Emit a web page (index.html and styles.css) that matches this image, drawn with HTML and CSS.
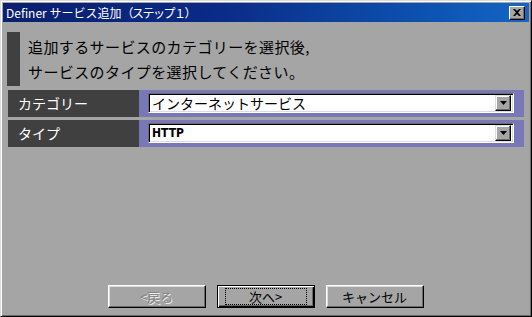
FILE: index.html
```html
<!DOCTYPE html>
<html lang="ja">
<head>
    <meta charset="UTF-8">
    <title>Definer サービス追加（ステップ１）</title>
    <link rel="stylesheet" href="styles.css">
</head>
<body>
    <div class="window">
        <div class="titlebar">
            <span class="title">Definer サービス追加<span class="step">（ステップ１）</span></span>
            <button class="close" aria-label="閉じる">
                <svg width="8" height="7" viewBox="0 0 8 7"><path d="M0 0h2l2 2 2-2h2L5 3.5 8 7H6L4 5 2 7H0l3-3.5z" fill="#000"/></svg>
            </button>
        </div>
        <div class="content">
            <div class="intro">
                <div class="bar"></div>
                <p>追加するサービスのカテゴリーを選択後,<br>サービスのタイプを選択してください。</p>
            </div>

            <div class="row">
                <div class="label">カテゴリー</div>
                <div class="field">
                    <div class="combo">
                        <span class="value">インターネットサービス</span>
                        <span class="drop"><svg width="7" height="4" viewBox="0 0 7 4"><path d="M0 0h7L3.5 4z" fill="#000"/></svg></span>
                    </div>
                </div>
            </div>
            <div class="row">
                <div class="label">タイプ</div>
                <div class="field">
                    <div class="combo">
                        <span class="value mono">HTTP</span>
                        <span class="drop"><svg width="7" height="4" viewBox="0 0 7 4"><path d="M0 0h7L3.5 4z" fill="#000"/></svg></span>
                    </div>
                </div>
            </div>

            <div class="buttons">
                <button class="btn disabled">&lt;戻る</button>
                <button class="btn default"><span class="focus">次へ&gt;</span></button>
                <button class="btn">キャンセル</button>
            </div>
        </div>
    </div>
</body>
</html>
```

FILE: styles.css
```css
body {
    margin: 0;
    background-color: #a5a5a5;
    font-family: "Noto Sans CJK JP", "DejaVu Sans", sans-serif;
}
.window {
    width: 532px;
    height: 317px;
    box-sizing: border-box;
    border: 1px solid;
    border-color: #dcdcdc #000 #000 #dcdcdc;
    box-shadow: inset 1px 1px #fff, inset -1px -1px #6a6a6a;
    padding: 2px;
    display: flex;
    flex-direction: column;
    background-color: #a5a5a5;
}
.titlebar {
    height: 19px;
    display: flex;
    align-items: center;
    justify-content: space-between;
    padding: 0 4px 0 3px;
    background: linear-gradient(to right, #0a1f6f, #0a2a86 40%, #0d52b0 80%, #1466c4);
    color: #fff;
}
.title {
    font-size: 12px;
    line-height: 19px;
}
.step {
    letter-spacing: -1.5px;
}
.close {
    width: 16px;
    height: 14px;
    padding: 0;
    margin: 0;
    display: flex;
    align-items: center;
    justify-content: center;
    background-color: #a5a5a5;
    border: 1px solid;
    border-color: #fff #000 #000 #fff;
    box-shadow: inset -1px -1px #6a6a6a;
}
.content {
    flex: 1;
    display: flex;
    flex-direction: column;
    padding: 10px 5px 0 4px;
}
.intro {
    display: flex;
    height: 54px;
}
.bar {
    width: 13px;
    background-color: #404040;
    margin-right: 8px;
}
.intro p {
    margin: 0;
    padding-top: 2px;
    font-size: 15px;
    line-height: 25px;
    letter-spacing: 0.4px;
    color: #000;
}
.row {
    display: flex;
    height: 27px;
    margin-left: 1px;
}
.intro + .row {
    margin-top: 4px;
}
.row + .row {
    margin-top: 3px;
}
.label {
    width: 131px;
    background-color: #404040;
    color: #fff;
    font-size: 14px;
    line-height: 27px;
    padding-left: 10px;
    box-sizing: border-box;
}
.field {
    width: 385px;
    background-color: #7878b8;
    padding: 3px 10px 4px 9px;
    box-sizing: border-box;
}
.combo {
    height: 20px;
    box-sizing: border-box;
    display: flex;
    align-items: center;
    background-color: #fff;
    border: 1px solid;
    border-color: #6a6a6a #fff #fff #6a6a6a;
    box-shadow: inset 1px 1px #000, inset -1px -1px #dcdcdc;
    padding: 0 2px 0 3px;
}
.value {
    flex: 1;
    font-size: 14px;
    line-height: 18px;
}
.value.mono {
    font-family: "DejaVu Sans Condensed", "DejaVu Sans", sans-serif;
    font-size: 12px;
    font-weight: bold;
}
.drop {
    width: 16px;
    height: 16px;
    box-sizing: border-box;
    display: flex;
    align-items: center;
    justify-content: center;
    background-color: #a5a5a5;
    border: 1px solid;
    border-color: #dcdcdc #000 #000 #dcdcdc;
    box-shadow: inset -1px -1px #6a6a6a, inset 1px 1px #fff;
}
.buttons {
    margin-top: auto;
    margin-bottom: 6px;
    display: flex;
    justify-content: center;
    gap: 11px;
}
.btn {
    width: 98px;
    height: 23px;
    padding: 0;
    margin: 0;
    box-sizing: border-box;
    background-color: #a5a5a5;
    border: 1px solid;
    border-color: #fff #000 #000 #fff;
    box-shadow: inset -1px -1px #6a6a6a, inset 1px 1px #dcdcdc;
    font-family: "Noto Sans CJK JP", sans-serif;
    font-size: 13px;
    color: #000;
    display: flex;
    align-items: center;
    justify-content: center;
}
.btn.disabled {
    color: #838383;
    text-shadow: 1px 1px #f0f0f0;
}
.btn.default {
    border: 1px solid #000;
    box-shadow: inset 1px 1px #fff, inset -1px -1px #000, inset -2px -2px #6a6a6a;
}
.focus {
    width: 80px;
    height: 15px;
    line-height: 15px;
    border: 1px dotted #000;
    text-align: center;
}
```
